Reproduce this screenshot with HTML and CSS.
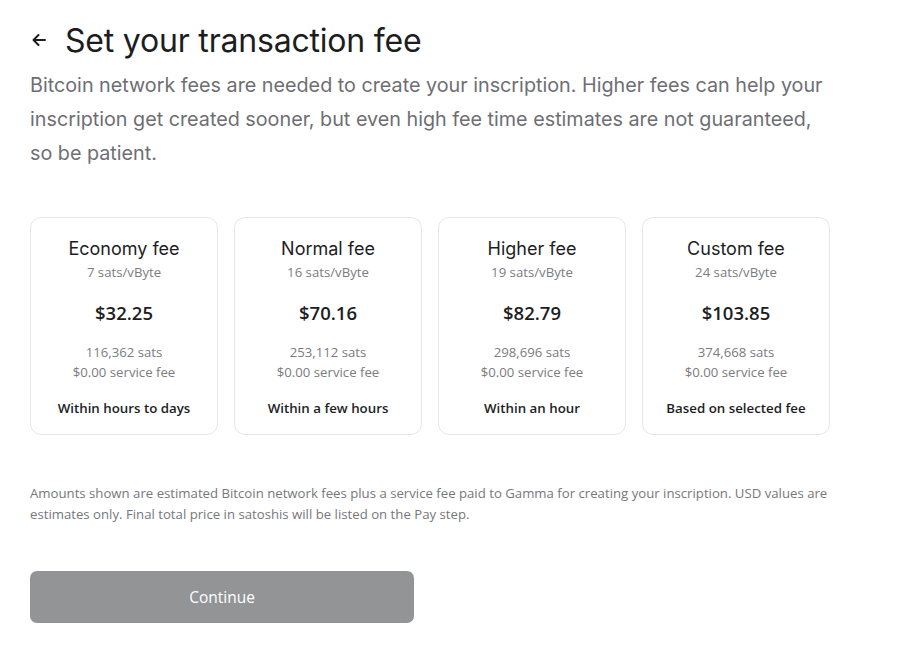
FILE: index.html
```html
<!DOCTYPE html>
<html>
<head>
<meta charset="utf-8">
<link rel="stylesheet" href="styles.css">
</head>
<body>
<main class="page">
  <header class="head">
    <svg class="back" width="16" height="16" viewBox="0 0 16 16" fill="none" stroke="#1d1d1f" stroke-width="2" stroke-linecap="round" stroke-linejoin="round"><path d="M14 8H2.5M7.5 3L2.5 8l5 5"/></svg>
    <h1>Set your transaction fee</h1>
  </header>
  <p class="intro">Bitcoin network fees are needed to create your inscription. Higher fees can help your inscription get created sooner, but even high fee time estimates are not guaranteed, so be patient.</p>
  <div class="cards">
    <div class="card">
      <div class="name">Economy fee</div>
      <div class="rate">7 sats/vByte</div>
      <div class="price">$32.25</div>
      <div class="meta">116,362 sats</div>
      <div class="meta">$0.00 service fee</div>
      <div class="eta">Within hours to days</div>
    </div>
    <div class="card">
      <div class="name">Normal fee</div>
      <div class="rate">16 sats/vByte</div>
      <div class="price">$70.16</div>
      <div class="meta">253,112 sats</div>
      <div class="meta">$0.00 service fee</div>
      <div class="eta">Within a few hours</div>
    </div>
    <div class="card">
      <div class="name">Higher fee</div>
      <div class="rate">19 sats/vByte</div>
      <div class="price">$82.79</div>
      <div class="meta">298,696 sats</div>
      <div class="meta">$0.00 service fee</div>
      <div class="eta">Within an hour</div>
    </div>
    <div class="card">
      <div class="name">Custom fee</div>
      <div class="rate">24 sats/vByte</div>
      <div class="price">$103.85</div>
      <div class="meta">374,668 sats</div>
      <div class="meta">$0.00 service fee</div>
      <div class="eta">Based on selected fee</div>
    </div>
  </div>
  <p class="note">Amounts shown are estimated Bitcoin network fees plus a service fee paid to Gamma for creating your inscription. USD values are estimates only. Final total price in satoshis will be listed on the Pay step.</p>
  <button class="continue">Continue</button>
</main>
</body>
</html>
```
FILE: styles.css
```css
* { box-sizing: border-box; }
html, body { margin: 0; padding: 0; background: #fff; }
body { font-family: "Open Sans", "Liberation Sans", sans-serif; color: #1d1d1f; }
.page { padding: 20px 30px 0 30px; width: 870px; }
.head { display: flex; align-items: center; gap: 18px; height: 40px; }
.back { flex: none; margin-left: 1px; }
h1 { margin: 0; font-family: Inter, sans-serif; font-weight: 400; font-size: 32px; letter-spacing: -0.2px; color: #1d1d1f; }
.intro { margin: 8px 0 0 0; font-family: Inter, sans-serif; font-size: 19.75px; line-height: 34px; color: #6e6e73; width: 800px; }
.cards { display: flex; gap: 16px; margin-top: 47px; }
.card { width: 188px; height: 218px; border: 1px solid #e6e6e8; border-radius: 11px; display: flex; flex-direction: column; align-items: center; padding-top: 19px; }
.name { font-family: Inter, sans-serif; font-size: 18px; line-height: 24px; color: #1d1d1f; }
.rate { font-size: 13.2px; line-height: 18px; color: #7c7c80; margin-top: 2px; }
.price { font-size: 18.5px; font-weight: 600; line-height: 24px; margin-top: 20px; color: #1d1d1f; }
.meta { font-size: 13.2px; line-height: 20px; color: #7c7c80; }
.price + .meta { margin-top: 17px; }
.eta { font-size: 13.3px; font-weight: 600; line-height: 20px; margin-top: 16px; color: #1d1d1f; }
.note { margin: 48px 0 0 0; font-size: 13.2px; line-height: 21px; color: #77777b; width: 830px; }
.continue { margin-top: 46px; width: 384px; height: 52px; border: none; border-radius: 7px; background: #939496; color: #fff; font-family: "Open Sans", sans-serif; font-size: 15.5px; font-weight: 500; cursor: pointer; }
```
